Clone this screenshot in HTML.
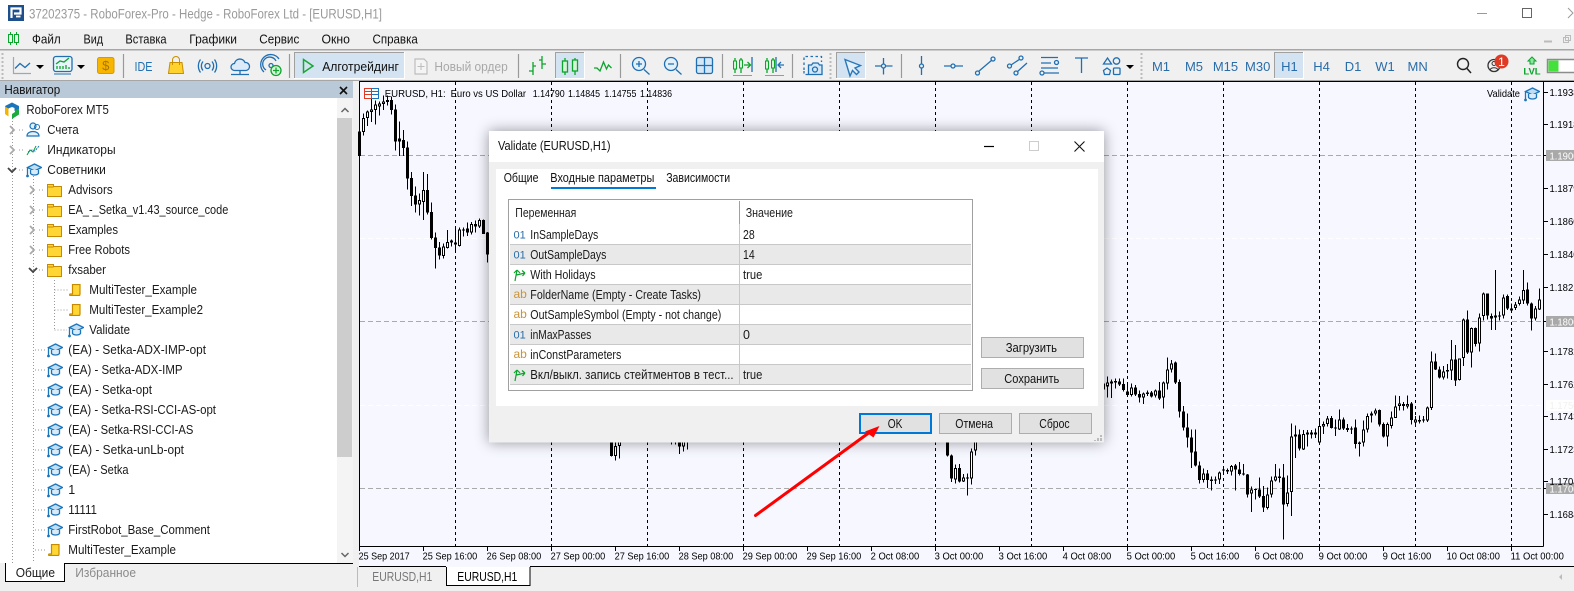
<!DOCTYPE html>
<html><head><meta charset="utf-8"><style>
html,body{margin:0;padding:0;background:#f0f0f0;width:1574px;height:591px;overflow:hidden}
svg{display:block;font-family:"Liberation Sans","Noto Sans CJK SC",sans-serif;font-size:12.5px;fill:#1a1a1a}
.m{font-size:12.5px;fill:#111}
.tf{font-size:13px;fill:#2a6ca8;text-anchor:middle}
.ic{fill:none;stroke:#1f6fb2;stroke-width:1.3}
.gr{fill:none;stroke:#0aa52a;stroke-width:1.3}
.sep{stroke:#999;stroke-width:1.2}
.tt{fill:none;stroke:#999;stroke-dasharray:1 2;stroke-width:1}
.v{fill:none;stroke:#aaa;stroke-width:1.8}
.o{fill:none;stroke:#444;stroke-width:1.8}
</style></head><body>
<svg width="1574" height="591" viewBox="0 0 1574 591" xmlns="http://www.w3.org/2000/svg">
<defs>
<symbol id="h" viewBox="0 0 16 15"><path d="M8.5 1 15.500 4.500 8.500 8 1.500 4.500Z" fill="#bfddf3" stroke="#1b75bb" stroke-width="1.300"/><path d="M4.500 7V10.500C6 12.500 11 12.500 12.500 10.500V7" fill="#d8ebf8" stroke="#1b75bb" stroke-width="1.300"/><path d="M1.500 5V12" fill="none" stroke="#1b75bb" stroke-width="1.300"/><circle cx="1.500" cy="13" r="1.400" fill="#1b75bb"/></symbol>
<symbol id="f" viewBox="0 0 15 13"><path d="M.5 .5h6v2h8v10H.5z" fill="#ffd633" stroke="#c68a00"/><path d="M.5 3h6" stroke="#c68a00"/></symbol>
<symbol id="s" viewBox="0 0 12 12"><path d="M3.500 .5h7.500v9.500c0 1-.5 1.500-1 1.500H1c-.5 0-.5-1.500 0-1.500h2.500z" fill="#ffd633" stroke="#c68a00" stroke-width="1.200"/></symbol>
<symbol id="b" viewBox="0 0 14 14"><path d="M2 13 4 2M4 2 1 5M4 2 7 5M3.500 7 12 5M12 5 9 2.500M12 5 9.500 8" fill="none" stroke="#0aa52a" stroke-width="1.200"/></symbol>
</defs>

<!-- title bar -->
<rect width="1574" height="29" fill="#fff"/>
<rect x="8" y="5" width="16" height="16" fill="#1d4f8c"/>
<path d="M11.500 18V8.500H20.500V13.500H14" fill="none" stroke="#fff" stroke-width="2.200"/><path d="M16 16.500h4.500" stroke="#fff" stroke-width="1.800"/>
<text x="29" y="18.500" font-size="13.500" style="fill:#9a9a9a" textLength="353" lengthAdjust="spacingAndGlyphs">37202375 - RoboForex-Pro - Hedge - RoboForex Ltd - [EURUSD,H1]</text>
<path d="M1477 13.500H1487" stroke="#999"/><rect x="1522.500" y="8.500" width="9" height="9" fill="none" stroke="#666"/><path d="M1568 8l5 5-5 5" fill="none" stroke="#999"/>

<!-- menu -->
<rect y="29" width="1574" height="20" fill="#f0f0f0"/>
<path d="M10.500 32V45M16.500 32V45" stroke="#0aa52a"/><rect x="8.500" y="34.500" width="4" height="8" fill="#e6f8e8" stroke="#0aa52a"/><rect x="14.500" y="34.500" width="4" height="8" fill="#e6f8e8" stroke="#0aa52a"/>
<text class="m" x="32" y="43.500" textLength="28.700" lengthAdjust="spacingAndGlyphs">Файл</text><text class="m" x="83.500" y="43.500" textLength="19.600" lengthAdjust="spacingAndGlyphs">Вид</text><text class="m" x="125.400" y="43.500" textLength="41.200" lengthAdjust="spacingAndGlyphs">Вставка</text><text class="m" x="189.300" y="43.500" textLength="47.700" lengthAdjust="spacingAndGlyphs">Графики</text><text class="m" x="259.300" y="43.500" textLength="40" lengthAdjust="spacingAndGlyphs">Сервис</text><text class="m" x="321.500" y="43.500" textLength="28.400" lengthAdjust="spacingAndGlyphs">Окно</text><text class="m" x="372.500" y="43.500" textLength="45.300" lengthAdjust="spacingAndGlyphs">Справка</text>
<path d="M1544 41.500h8" stroke="#bbb" stroke-width="2"/><rect x="1563.500" y="37.500" width="5" height="5" fill="none" stroke="#bbb"/><rect x="1565.500" y="35.500" width="5" height="5" fill="none" stroke="#bbb"/>
<rect y="49" width="1574" height="1.500" fill="#a6a6a6"/>

<!-- toolbar -->
<rect y="50.500" width="1574" height="30" fill="#f0f0f0"/>
<rect y="80" width="1574" height="1" fill="#a6a6a6"/>
<path d="M2.500 53V79M830.500 53V79M1141.500 53V79" stroke="#bbb" stroke-width="2" stroke-dasharray="2 2"/>
<path d="M13.500 57V73.500H31" fill="none" stroke="#a0a8ae" stroke-width="1.200"/><path d="M15 68.500l5-5 5 4 5-4.500" class="ic"/>
<path d="M36 65h8l-4 4z" fill="#000"/>
<rect x="53.500" y="56.500" width="18.500" height="15" rx="2.500" fill="#e9f4fc" stroke="#1f6fb2" stroke-width="1.300"/><path d="M56 64l4-3 4 1 5-4" class="gr"/><path d="M57 69v-3M60 69v-3M63 69v-3M66 69v-4M69 69v-2" class="gr"/><path d="M54 74h17" stroke="#1f6fb2"/>
<path d="M77 65h8l-4 4z" fill="#000"/>
<rect x="97.500" y="57.500" width="16.500" height="16" rx="2" fill="#f7b500" stroke="#d99a00"/><text x="105.800" y="70" font-size="13" style="fill:#a87500" text-anchor="middle">$</text>
<path class="sep" d="M123.500 54V78M289.500 54V78M518.500 54V78M620.500 54V78M722.500 54V78M792.500 54V78M901.500 54V78"/>
<text x="134.500" y="71" font-size="13" style="fill:#1f6fb2" textLength="18" lengthAdjust="spacingAndGlyphs">IDE</text>
<path d="M168.500 73.500l1.500-11h12l1.500 11z" fill="#ffd22e" stroke="#c88f00"/><path d="M172.500 65v-5a3.500 3.500 0 0 1 7 0v5" fill="none" stroke="#c88f00"/>
<circle cx="207.500" cy="66" r="2.500" class="ic"/><path d="M203 61.500a7 7 0 0 0 0 9M212 61.500a7 7 0 0 1 0 9M200.500 59.500a11 11 0 0 0 0 13M214.500 59.500a11 11 0 0 1 0 13" class="ic"/>
<path d="M234.500 70.500a3.500 3.500 0 0 1 0-7 5.500 5.500 0 0 1 10.500-1 4 4 0 0 1 1 8z" fill="#dcebf7" stroke="#1f6fb2" stroke-width="1.300"/><path d="M231 74.500h18M240 71V75" class="ic"/>
<circle cx="271" cy="65.500" r="2" class="ic"/><path d="M266 70a7 7 0 1 1 10-9M264 72a10 10 0 1 1 15-13" class="ic"/><circle cx="276" cy="70.500" r="5" fill="#d8f5dc" stroke="#0aa52a" stroke-width="1.300"/><path d="M273 70.500h6M276 67.500v6" class="gr"/>
<rect x="294" y="52" width="110" height="26" fill="#d3e3f2"/><path d="M294.500 78V52.500H404" fill="none" stroke="#a0a0a0"/><path d="M404.500 52V78.500H294" fill="none" stroke="#fff"/>
<path d="M303.500 59.500 313 66 303.500 72.500Z" fill="none" stroke="#16a832" stroke-width="1.500"/>
<text x="322.200" y="71" font-size="13" style="fill:#111" textLength="76.700" lengthAdjust="spacingAndGlyphs">Алготрейдинг</text>
<path d="M415 59h9l3 3v12h-12z" fill="#f4f4f4" stroke="#bdbdbd" stroke-width="1.200"/><path d="M421 63v7M417.500 66.500h7" stroke="#bdbdbd"/>
<text x="434.400" y="71" font-size="13" style="fill:#a8a8a8" textLength="73.400" lengthAdjust="spacingAndGlyphs">Новый ордер</text>
<path d="M529 71h4M533 62V75M533 66h3M539 60h3M542 56V69M542 64h4" class="gr"/>
<rect x="555" y="52" width="29" height="26" fill="#d3e3f2"/><path d="M555.500 78V52.500H584" fill="none" stroke="#a0a0a0"/><path d="M584.500 52V78.500H555" fill="none" stroke="#fff"/>
<path d="M565 58V75M575 58V75" class="gr"/><rect x="562.500" y="61" width="5" height="11" fill="#d6f3da" stroke="#0aa52a" stroke-width="1.300"/><rect x="572.500" y="60" width="5" height="11" fill="#d6f3da" stroke="#0aa52a" stroke-width="1.300"/>
<path d="M594 68h3l3 3 3.500-9 3 7 2-4 3 3" class="gr"/>
<circle cx="639" cy="64" r="6.500" fill="#e3f0fa" stroke="#1f6fb2" stroke-width="1.300"/><path d="M636 64h6M639 61v6M644 69.500l5.500 5" class="ic"/>
<circle cx="671" cy="64" r="6.500" fill="#e3f0fa" stroke="#1f6fb2" stroke-width="1.300"/><path d="M668 64h6M676 69.500l5.500 5" class="ic"/>
<rect x="696.500" y="57.500" width="16" height="16" rx="2" fill="#d4e7f6" stroke="#1f6fb2" stroke-width="1.300"/><path d="M704.500 58v15M697 65.500h15" class="ic"/>
<path d="M735 58V73M741 58V73" class="gr"/><rect x="733.500" y="61" width="3" height="8" fill="#d6f3da" stroke="#0aa52a"/><rect x="739.500" y="60" width="3" height="8" fill="#d6f3da" stroke="#0aa52a"/><path d="M744 65h6M747.500 62l3 3-3 3" class="gr"/><path d="M752 57V72" class="ic"/><path d="M733 75.500h19" stroke="#999"/>
<path d="M767 58V73M773 58V73" class="gr"/><rect x="765.500" y="61" width="3" height="8" fill="#d6f3da" stroke="#0aa52a"/><rect x="771.500" y="60" width="3" height="8" fill="#d6f3da" stroke="#0aa52a"/><path d="M776 57V72" class="ic"/><path d="M778 65h6M781 62l-3 3 3 3" class="ic"/><path d="M765 75.500h19" stroke="#999"/>
<path d="M804 70V56.500H821.500V62M808 74.500H804V70" fill="none" stroke="#1f6fb2" stroke-width="1.300" stroke-dasharray="2.500 2.500"/><path d="M808.500 74.500V65h3l1.500-2h5l1.500 2h2.500v9.500z" fill="#d4e7f6" stroke="#1f6fb2" stroke-width="1.300"/><circle cx="815" cy="69.500" r="2.500" class="ic"/>
<rect x="836" y="52" width="29" height="26" fill="#d3e3f2"/><path d="M836.500 78V52.500H865" fill="none" stroke="#a0a0a0"/><path d="M865.500 52V78.500H836" fill="none" stroke="#fff"/>
<path d="M845 59.500l15.500 6-5.500 2.500 4 4-2.500 2.500-4-4-2.500 5.500z" fill="#e3f0fa" stroke="#2a78b8" stroke-width="1.400"/>
<path d="M875 66h6.500M885.500 66h7M883.500 58V64M883.500 68V74.500" class="ic"/><circle cx="883.500" cy="66" r="2" class="ic"/>
<path d="M921.500 56V64M921.500 68V75" class="ic"/><circle cx="921.500" cy="66" r="2" class="ic"/>
<path d="M944 66h7M955 66h8" class="ic"/><circle cx="953" cy="66" r="2" class="ic"/>
<path d="M978.500 71.500 992 60" class="ic"/><circle cx="977.500" cy="73" r="2" class="ic"/><circle cx="993" cy="59" r="2" class="ic"/>
<path d="M1011 65 1020 59M1017 72 1027 63" class="ic"/><circle cx="1009.500" cy="66" r="2" class="ic"/><circle cx="1021" cy="58" r="2" class="ic"/><circle cx="1016" cy="73" r="2" class="ic"/>
<path d="M1041 57.500h17M1041 63h10M1041 68h17M1044 73h15" class="ic"/><circle cx="1056.500" cy="62.500" r="2" class="ic"/><circle cx="1042" cy="73" r="2" class="ic"/>
<path d="M1075 58h13M1081.500 58V73" class="ic"/>
<path d="M1107.500 58 1111.500 64H1103.500Z M1103.500 70.500l3.500-2.500 3.500 2.500-1 4h-5z" class="ic"/><circle cx="1116.500" cy="61" r="3.200" class="ic"/><rect x="1113.500" y="68" width="6.500" height="6.500" rx="1" class="ic"/>
<path d="M1126 65h8l-4 4z" fill="#000"/>
<rect x="1274" y="52" width="29" height="26" fill="#d3e3f2"/><path d="M1274.500 78V52.500H1303" fill="none" stroke="#a0a0a0"/><path d="M1303.500 52V78.500H1274" fill="none" stroke="#fff"/>
<text class="tf" x="1161" y="71">M1</text><text class="tf" x="1194" y="71">M5</text><text class="tf" x="1225.500" y="71">M15</text><text class="tf" x="1257.700" y="71">M30</text><text class="tf" x="1289.400" y="71">H1</text><text class="tf" x="1321.500" y="71">H4</text><text class="tf" x="1353" y="71">D1</text><text class="tf" x="1385" y="71">W1</text><text class="tf" x="1417.600" y="71">MN</text>
<circle cx="1463" cy="64" r="5.500" fill="none" stroke="#222" stroke-width="1.400"/><path d="M1467 68.500l4 4.500" stroke="#222" stroke-width="1.500"/>
<circle cx="1494" cy="65.500" r="6" fill="none" stroke="#333" stroke-width="1.300"/><circle cx="1494" cy="63.500" r="2" fill="none" stroke="#333"/><path d="M1490 70c1-3 7-3 8 0" fill="none" stroke="#333"/>
<circle cx="1501.500" cy="61.500" r="7" fill="#e03a25"/><text x="1501.500" y="66" font-size="12" text-anchor="middle" style="fill:#fff">1</text>
<path d="M1532 57l4 4h-2v3h-4v-3h-2z" fill="#8fe6a0" stroke="#0aa52a"/><text x="1532" y="74.500" font-size="9.500" font-weight="bold" text-anchor="middle" style="fill:#0aa52a">LVL</text>
<rect x="1547.500" y="59.500" width="30" height="13" fill="#fff" stroke="#8c8c8c" stroke-width="1.500"/><rect x="1548.500" y="60.500" width="10" height="11" fill="#44e03c"/>

<!-- navigator -->
<rect y="81" width="353" height="17" fill="#b9c9d8"/>
<text x="4.400" y="94" style="fill:#111" textLength="55.800" lengthAdjust="spacingAndGlyphs">Навигатор</text>
<path d="M340 87l7 7M347 87l-7 7" stroke="#111" stroke-width="1.600"/>
<rect y="98" width="337" height="465" fill="#fff"/>
<rect x="337" y="98" width="16" height="465" fill="#f4f4f4"/>
<rect x="337" y="118" width="15" height="339" fill="#cdcdcd"/>
<path d="M341.500 112l3.500-3.500 3.500 3.500" fill="none" stroke="#666" stroke-width="1.500"/><path d="M341.500 553l3.500 3.500 3.500-3.500" fill="none" stroke="#666" stroke-width="1.500"/>
<path class="tt" d="M12.500 118V563M33.500 176V563M54.500 280V330M54.500 290H68M54.500 310H68M54.500 330H67M35 350H46M35 370H46M35 390H46M35 410H46M35 430H46M35 450H46M35 470H46M35 490H46M35 510H46M35 530H46M35 550H47M19 130H25M19 150H25M19 170H25M39 190H45M39 210H45M39 230H45M39 250H45M39 270H45"/>
<!-- RoboForex logo -->
<path d="M5 106l7-3.500 7 3.500v3l-4.500 2v-3l-2.500-1-3.500 1.500v4z" fill="#1b75bb"/><path d="M5 106.500v7.500l3.500 2.500v-8z" fill="#f2b400"/><path d="M19 109v5.500l-7 4.500v-5l3-2v-2z" fill="#1bab3c"/>
<text x="26.400" y="114" textLength="82.500" lengthAdjust="spacingAndGlyphs">RoboForex MT5</text>
<path class="v" d="M10 126l4 4-4 4M10 146l4 4-4 4M30 186l4 4-4 4M30 206l4 4-4 4M30 226l4 4-4 4M30 246l4 4-4 4"/>
<path class="o" d="M8 168l4 4 4-4M29 268l4 4 4-4"/>
<circle cx="33" cy="126" r="3" fill="#e3f0fa" stroke="#1b75bb" stroke-width="1.200"/><path d="M27 136c0-6 12-6 12 0z" fill="#e3f0fa" stroke="#1b75bb" stroke-width="1.200"/><circle cx="37" cy="127" r="2.500" fill="none" stroke="#1b75bb"/>
<text x="47.300" y="134" textLength="31.400" lengthAdjust="spacingAndGlyphs">Счета</text>
<path d="M27 155l3-5 3 2 3-6" fill="none" stroke="#0aa52a"/><path d="M28 152l4-2 3 1 4-5" fill="none" stroke="#1b75bb" stroke-dasharray="2 1"/>
<text x="47.300" y="154" textLength="68.300" lengthAdjust="spacingAndGlyphs">Индикаторы</text>
<use href="#h" x="26" y="163" width="16" height="15"/><text x="47.300" y="174" textLength="58.500" lengthAdjust="spacingAndGlyphs">Советники</text>
<use href="#f" x="47" y="184" width="15" height="13"/><text x="68.300" y="194" textLength="44.300" lengthAdjust="spacingAndGlyphs">Advisors</text>
<use href="#f" x="47" y="204" width="15" height="13"/><text x="68.300" y="214" textLength="160" lengthAdjust="spacingAndGlyphs">EA_-_Setka_v1.43_source_code</text>
<use href="#f" x="47" y="224" width="15" height="13"/><text x="68.300" y="234" textLength="49.700" lengthAdjust="spacingAndGlyphs">Examples</text>
<use href="#f" x="47" y="244" width="15" height="13"/><text x="68.300" y="254" textLength="61.700" lengthAdjust="spacingAndGlyphs">Free Robots</text>
<use href="#f" x="47" y="264" width="15" height="13"/><text x="68.300" y="274" textLength="37.700" lengthAdjust="spacingAndGlyphs">fxsaber</text>
<use href="#s" x="69" y="284" width="12" height="12"/><text x="89.300" y="294" textLength="107.700" lengthAdjust="spacingAndGlyphs">MultiTester_Example</text>
<use href="#s" x="69" y="304" width="12" height="12"/><text x="89.300" y="314" textLength="113.700" lengthAdjust="spacingAndGlyphs">MultiTester_Example2</text>
<use href="#h" x="68" y="323" width="16" height="15"/><text x="89.300" y="334" textLength="40.700" lengthAdjust="spacingAndGlyphs">Validate</text>
<use href="#h" x="47" y="343" width="16" height="15"/><text x="68.300" y="354" textLength="137.700" lengthAdjust="spacingAndGlyphs">(EA) - Setka-ADX-IMP-opt</text>
<use href="#h" x="47" y="363" width="16" height="15"/><text x="68.300" y="374" textLength="114.300" lengthAdjust="spacingAndGlyphs">(EA) - Setka-ADX-IMP</text>
<use href="#h" x="47" y="383" width="16" height="15"/><text x="68.300" y="394" textLength="83.700" lengthAdjust="spacingAndGlyphs">(EA) - Setka-opt</text>
<use href="#h" x="47" y="403" width="16" height="15"/><text x="68.300" y="414" textLength="147.700" lengthAdjust="spacingAndGlyphs">(EA) - Setka-RSI-CCI-AS-opt</text>
<use href="#h" x="47" y="423" width="16" height="15"/><text x="68.300" y="434" textLength="125" lengthAdjust="spacingAndGlyphs">(EA) - Setka-RSI-CCI-AS</text>
<use href="#h" x="47" y="443" width="16" height="15"/><text x="68.300" y="454" textLength="115.700" lengthAdjust="spacingAndGlyphs">(EA) - Setka-unLb-opt</text>
<use href="#h" x="47" y="463" width="16" height="15"/><text x="68.300" y="474" textLength="60.300" lengthAdjust="spacingAndGlyphs">(EA) - Setka</text>
<use href="#h" x="47" y="483" width="16" height="15"/><text x="68.300" y="494">1</text>
<use href="#h" x="47" y="503" width="16" height="15"/><text x="68.300" y="514" textLength="28.700" lengthAdjust="spacingAndGlyphs">11111</text>
<use href="#h" x="47" y="523" width="16" height="15"/><text x="68.300" y="534" textLength="141.700" lengthAdjust="spacingAndGlyphs">FirstRobot_Base_Comment</text>
<use href="#s" x="48" y="544" width="12" height="12"/><text x="68.300" y="554" textLength="107.700" lengthAdjust="spacingAndGlyphs">MultiTester_Example</text>
<rect x="0" y="563" width="353" height="28" fill="#f0f0f0"/>
<path d="M65 563.500H353" stroke="#000"/>
<path d="M5.500 563V581.500H64.500V563" fill="#fff" stroke="#000"/>
<text x="15.700" y="577" textLength="39.300" lengthAdjust="spacingAndGlyphs">Общие</text><text x="75.300" y="577" style="fill:#8a8a8a" textLength="60.700" lengthAdjust="spacingAndGlyphs">Избранное</text>

<!-- chart -->
<rect x="359" y="82" width="1215" height="485" fill="#f6f7ff"/>
<path d="M359 81.500H1574M359.500 81V546M359 546.500H1543.500M1543.500 81V546.500" stroke="#000" fill="none"/>
<path d="M359 566.500H446M530 566.500H1574" stroke="#000"/>
<!-- grid -->
<path d="M360 155.500H1543M360 321.500H1543M360 488.500H1543" stroke="#aaa" stroke-dasharray="5 3"/>
<path d="M360 238.500H1543M360 405.500H1543" stroke="#fff" stroke-dasharray="5 3"/>
<path d="M455.500 82V546M551.500 82V546M647.500 82V546M743.500 82V546M839.500 82V546M935.500 82V546M1031.500 82V546M1127.500 82V546M1223.500 82V546M1319.500 82V546M1415.500 82V546M1511.500 82V546" stroke="#000" stroke-dasharray="3 3"/>
<!-- candles right -->
<g transform="translate(1100.170,280) scale(.33333)" shape-rendering="crispEdges" fill="none">
<path stroke="#000" stroke-width="3" d="M10 305V358M22 292V352M34 298V354M46 296V325M58 295V318M70 296V335M82 308V350M94 310V350M106 315V348M118 332V368M130 338V372M142 332V348M154 333V352M166 328V352M178 306V360M190 304V386M202 232V328M214 240V278M226 245V312M238 298V412M250 378V452M262 400V502M274 448V564M286 448V560M298 545V610M310 565V608M322 570V624M334 590V632M346 590V612M358 575V612M370 560V582M382 566V582M394 555V586M406 552V632M418 546V586M430 552V586M442 582V652M454 620V696M466 626V658M478 592V654M490 618V696M502 622V688M514 590V652M526 552V604M538 565V607M550 552V778M562 586V680M574 430V708M586 436V534M598 448V512M610 450V510M622 450V500M634 450V475M646 446V474M658 418V490M670 424V462M682 408V440M694 408V446M706 418V468M718 388V450M730 412V450M742 432V456M754 440V462M766 418V506M778 484V530M790 422V500M802 400V458M814 394V428M826 385V406M838 388V440M850 428V472M862 428V500M874 394V446M886 346V414M898 348V392M910 366V392M922 346V386M934 366V434M946 408V436M958 406V430M970 408V428M982 380V426M994 214V390M1006 220V270M1018 260V296M1030 258V298M1042 252V296M1054 180V300M1066 195V318M1078 235V302M1090 115V258M1102 92V222M1114 142V262M1126 142V200M1138 100V214M1150 38V122M1162 40V118M1174 100V150M1186 -30V150M1198 95V122M1210 44V116M1222 44V90M1234 70V96M1246 66V90M1258 50V76M1270 -30V72M1282 8V76M1294 68V152M1306 78V122M1318 26V90"/>
<path stroke="#000" stroke-width="9" d="M10 310V325M22 310V320M34 305V311M46 303V308M58 304V314M70 312V330M82 334V345M94 322V345M106 322V344M118 342V353M130 341V352M142 338V342M154 338V350M166 331V347M178 331V356M190 307V352M202 268V311M214 250V268M226 247V308M238 306V395M250 394V443M262 442V472M274 472V518M286 514V556M298 557V600M310 580V600M322 580V600M334 599V603M346 598V602M358 577V598M370 568V572M382 570V574M394 558V574M406 556V568M418 568V582M430 580V584M442 583V644M454 628V640M466 627V630M478 628V650M490 648V682M502 644V684M514 602V644M526 590V602M538 590V594M550 592V674M562 638V672M574 470V636M586 464V470M598 464V506M610 462V508M622 458V464M634 458V463M646 458V464M658 438V488M670 432V440M682 416V432M694 414V444M706 442V446M718 418V448M730 418V446M742 444V450M754 445V448M766 442V492M778 488V492M790 448V488M802 408V448M814 400V406M826 392V400M838 390V434M850 432V470M862 432V470M874 412V438M886 380V414M898 370V378M910 372V378M922 372V380M934 370V420M946 418V428M958 420V424M970 419V422M982 382V422M994 244V384M1006 244V268M1018 268V292M1030 274V292M1042 270V274M1054 238V272M1066 238V302M1078 236V300M1090 118V234M1102 118V218M1114 144V218M1126 144V192M1138 112V190M1150 40V108M1162 40V106M1174 108V115M1186 107V112M1198 106V110M1210 52V106M1222 48V86M1234 86V92M1246 74V84M1258 58V72M1270 30V62M1282 28V70M1294 70V116M1306 86V116M1318 58V88"/>
<path stroke="#fff" stroke-width="3" d="M10 313V322M22 313V317M94 325V342M130 344V349M166 334V344M190 310V349M202 271V308M214 253V265M310 583V597M358 580V595M394 561V571M454 631V637M502 647V681M514 605V641M526 593V599M562 641V669M574 473V633M586 467V467M610 465V505M622 461V461M646 461V461M658 441V485M670 435V437M682 419V429M718 421V445M790 451V485M802 411V445M814 403V403M826 395V397M862 435V467M874 415V435M886 383V411M898 373V375M910 375V375M922 375V377M946 421V425M982 385V419M994 247V381M1030 277V289M1054 241V269M1078 239V297M1090 121V231M1114 147V215M1138 115V187M1150 43V105M1186 109V110M1210 55V103M1234 89V89M1246 77V81M1258 61V69M1270 33V59M1306 89V113M1318 61V85"/>
</g>
<!-- candles left -->
<g transform="translate(356.170,82) scale(.33333)" shape-rendering="crispEdges" fill="none">
<path stroke="#000" stroke-width="3" d="M10 100V228M22 95V160M34 86V132M46 50V120M58 56V128M70 58V100M82 40V84M94 40V70M106 44V98M118 68V205M130 118V222M142 144V222M154 178V322M166 270V372M178 314V392M190 334V400M202 270V414M214 276V398M226 362V472M238 452V560M250 480V532M262 484V530M274 444V500M286 472V494M298 432V512M310 436V494M322 436V464M334 422V462M346 420V458M358 416V452M370 410V438M382 412V456M394 450V542"/>
<path stroke="#000" stroke-width="9" d="M10 148V222M22 108V150M34 88V108M46 82V90M58 68V84M70 64V74M82 58V66M94 54V60M106 54V84M118 82V178M130 170V178M142 174V198M154 196V290M166 288V342M178 340V368M190 354V368M202 324V360M214 324V392M226 390V468M238 466V498M250 496V520M262 494V522M274 480V498M286 476V482M298 482V488M310 442V492M322 442V446M334 440V452M346 426V452M358 426V434M370 414V434M382 414V456M394 452V518"/>
<path stroke="#fff" stroke-width="3" d="M22 111V147M34 91V105M46 85V87M58 71V81M70 67V71M82 61V63M190 357V365M202 327V357M262 497V519M274 483V495M286 479V479M310 445V489M346 429V449M370 417V431"/>
</g>
<!-- candles below dialog -->
<g transform="translate(750.170,320) scale(.33333)" shape-rendering="crispEdges" fill="none">
<path stroke="#000" stroke-width="3" d="M592 366V410M604 404V486M616 434V490M628 432V488M640 462V486M652 460V526M664 386V494M676 366V406M1060 180V240M1072 170V226"/>
<path stroke="#000" stroke-width="9" d="M592 366V406M604 406V476M616 444V478M628 444V484M640 472V484M652 472V476M664 394V476M676 366V392M1060 192V208M1072 188V198"/>
<path stroke="#fff" stroke-width="3" d="M616 447V475M640 475V481M664 397V473M676 366V389M1072 191V195"/>
</g>
<g transform="translate(356.170,440) scale(.33333)" shape-rendering="crispEdges" fill="none">
<path stroke="#000" stroke-width="3" d="M766 6V50M778 6V62M790 6V56M946 6V14M958 6V14M970 6V42M982 6V34M994 6V28"/>
<path stroke="#000" stroke-width="9" d="M766 6V48M778 18V48M790 6V18M970 6V20M982 6V20"/>
<path stroke="#fff" stroke-width="3" d="M778 21V45M790 6V15M982 6V17"/>
</g>
<!-- chart header -->
<rect x="364.500" y="88.500" width="7" height="10" fill="#fff" stroke="#e03a25"/><path d="M365 91.500h6M365 94.500h6" stroke="#e03a25"/>
<rect x="371.500" y="88.500" width="7" height="10" fill="#fff" stroke="#1b75bb"/><path d="M372 91.500h6M372 94.500h6" stroke="#1b75bb"/>
<g style="font-size:10.500px;fill:#000">
<text x="384.700" y="97" textLength="61" lengthAdjust="spacingAndGlyphs">EURUSD, H1:</text><text x="450.600" y="97" textLength="75.500" lengthAdjust="spacingAndGlyphs">Euro vs US Dollar</text><text x="532.700" y="97" textLength="32" lengthAdjust="spacingAndGlyphs">1.14790</text><text x="568" y="97" textLength="32" lengthAdjust="spacingAndGlyphs">1.14845</text><text x="604.400" y="97" textLength="32" lengthAdjust="spacingAndGlyphs">1.14755</text><text x="640" y="97" textLength="32" lengthAdjust="spacingAndGlyphs">1.14836</text><text x="1487" y="97" textLength="33" lengthAdjust="spacingAndGlyphs">Validate</text></g>
<use href="#h" x="1524" y="87" width="16" height="15"/>
<!-- price axis -->
<path stroke="#000" d="M1543 92.500h5M1543 124.500h5M1543 155.500h5M1543 188.500h5M1543 221.500h5M1543 254.500h5M1543 287.500h5M1543 321.500h5M1543 351.500h5M1543 384.500h5M1543 416.500h5M1543 449.500h5M1543 481.500h5M1543 488.500h5M1543 514.500h5"/>
<rect x="1546" y="150" width="28" height="11" fill="#a9a9a9"/><rect x="1546" y="316" width="28" height="11" fill="#a9a9a9"/><rect x="1546" y="483" width="28" height="11" fill="#a9a9a9"/><rect x="1546" y="400" width="28" height="11" fill="#fff"/>
<g style="font-size:10.500px;fill:#000">
<text x="1549.500" y="96" textLength="29" lengthAdjust="spacingAndGlyphs">1.1938</text><text x="1549.500" y="128" textLength="29" lengthAdjust="spacingAndGlyphs">1.1918</text><text x="1549.500" y="192" textLength="29" lengthAdjust="spacingAndGlyphs">1.1879</text><text x="1549.500" y="225" textLength="29" lengthAdjust="spacingAndGlyphs">1.1860</text><text x="1549.500" y="258" textLength="29" lengthAdjust="spacingAndGlyphs">1.1840</text><text x="1549.500" y="291" textLength="29" lengthAdjust="spacingAndGlyphs">1.1821</text><text x="1549.500" y="355" textLength="29" lengthAdjust="spacingAndGlyphs">1.1782</text><text x="1549.500" y="388" textLength="29" lengthAdjust="spacingAndGlyphs">1.1762</text><text x="1549.500" y="420" textLength="29" lengthAdjust="spacingAndGlyphs">1.1743</text><text x="1549.500" y="453" textLength="29" lengthAdjust="spacingAndGlyphs">1.1723</text><text x="1549.500" y="485" textLength="29" lengthAdjust="spacingAndGlyphs">1.1704</text><text x="1549.500" y="518" textLength="29" lengthAdjust="spacingAndGlyphs">1.1684</text></g>
<g style="font-size:10.500px;fill:#fff"><text x="1549.500" y="159.500" textLength="29" lengthAdjust="spacingAndGlyphs">1.1900</text><text x="1549.500" y="325.500" textLength="29" lengthAdjust="spacingAndGlyphs">1.1800</text><text x="1549.500" y="492.500" textLength="29" lengthAdjust="spacingAndGlyphs">1.1700</text><text x="1549.500" y="409" style="fill:#f0f0f0" textLength="29" lengthAdjust="spacingAndGlyphs">1.1750</text></g>
<!-- date axis -->
<path stroke="#000" d="M359.500 547v4M423.500 547v4M487.500 547v4M551.500 547v4M615.500 547v4M679.500 547v4M743.500 547v4M807.500 547v4M871.500 547v4M935.500 547v4M999.500 547v4M1063.500 547v4M1127.500 547v4M1191.500 547v4M1255.500 547v4M1319.500 547v4M1383.500 547v4M1447.500 547v4M1511.500 547v4"/>
<g style="font-size:10.500px;fill:#000">
<text x="358.600" y="559.500" textLength="51" lengthAdjust="spacingAndGlyphs">25 Sep 2017</text><text x="422.600" y="559.500" textLength="54.700" lengthAdjust="spacingAndGlyphs">25 Sep 16:00</text><text x="486.600" y="559.500" textLength="54.700" lengthAdjust="spacingAndGlyphs">26 Sep 08:00</text><text x="550.600" y="559.500" textLength="54.700" lengthAdjust="spacingAndGlyphs">27 Sep 00:00</text><text x="614.600" y="559.500" textLength="54.700" lengthAdjust="spacingAndGlyphs">27 Sep 16:00</text><text x="678.600" y="559.500" textLength="54.700" lengthAdjust="spacingAndGlyphs">28 Sep 08:00</text><text x="742.600" y="559.500" textLength="54.700" lengthAdjust="spacingAndGlyphs">29 Sep 00:00</text><text x="806.600" y="559.500" textLength="54.700" lengthAdjust="spacingAndGlyphs">29 Sep 16:00</text><text x="870.600" y="559.500" textLength="48.700" lengthAdjust="spacingAndGlyphs">2 Oct 08:00</text><text x="934.600" y="559.500" textLength="48.700" lengthAdjust="spacingAndGlyphs">3 Oct 00:00</text><text x="998.600" y="559.500" textLength="48.700" lengthAdjust="spacingAndGlyphs">3 Oct 16:00</text><text x="1062.600" y="559.500" textLength="48.700" lengthAdjust="spacingAndGlyphs">4 Oct 08:00</text><text x="1126.600" y="559.500" textLength="48.700" lengthAdjust="spacingAndGlyphs">5 Oct 00:00</text><text x="1190.600" y="559.500" textLength="48.700" lengthAdjust="spacingAndGlyphs">5 Oct 16:00</text><text x="1254.600" y="559.500" textLength="48.700" lengthAdjust="spacingAndGlyphs">6 Oct 08:00</text><text x="1318.600" y="559.500" textLength="48.700" lengthAdjust="spacingAndGlyphs">9 Oct 00:00</text><text x="1382.600" y="559.500" textLength="48.700" lengthAdjust="spacingAndGlyphs">9 Oct 16:00</text><text x="1446.600" y="559.500" textLength="53.300" lengthAdjust="spacingAndGlyphs">10 Oct 08:00</text><text x="1510.600" y="559.500" textLength="53.300" lengthAdjust="spacingAndGlyphs">11 Oct 00:00</text></g>
<!-- bottom tabs -->
<path d="M357.500 567V587" stroke="#bbb"/>
<path d="M446.500 567V585.500H530V567" fill="#fff" stroke="#000"/>
<text x="372.300" y="581" style="fill:#777" textLength="60" lengthAdjust="spacingAndGlyphs">EURUSD,H1</text><text x="457.300" y="581" style="fill:#000" textLength="60" lengthAdjust="spacingAndGlyphs">EURUSD,H1</text>
<path d="M1562 574v6l-3-3z" fill="#bbb"/>

<!-- dialog -->
<rect x="489" y="131" width="615" height="311.500" fill="#f0f0f0" style="filter:drop-shadow(0 0 7px rgba(0,0,0,.4))"/>
<rect x="489" y="131" width="615" height="31" fill="#fff"/>
<text x="498" y="150" style="fill:#111" textLength="112.500" lengthAdjust="spacingAndGlyphs">Validate (EURUSD,H1)</text>
<path d="M984 146.500H994" stroke="#000" stroke-width="1.200"/><rect x="1029.500" y="141.500" width="9" height="9" fill="none" stroke="#ccc"/><path d="M1074.500 141.500l10 10M1084.500 141.500l-10 10" stroke="#111" stroke-width="1.100"/>
<rect x="496" y="169" width="602" height="237" fill="#fff"/>
<text x="503.700" y="182" style="fill:#111" textLength="34.800" lengthAdjust="spacingAndGlyphs">Общие</text><text x="550.300" y="182" style="fill:#111" textLength="104" lengthAdjust="spacingAndGlyphs">Входные параметры</text><text x="666.200" y="182" style="fill:#111" textLength="63.900" lengthAdjust="spacingAndGlyphs">Зависимости</text>
<rect x="551" y="187" width="105" height="2" fill="#0078d7"/>
<!-- table -->
<rect x="508.500" y="199.500" width="464" height="191" fill="#fff" stroke="#a0a0a0"/>
<rect x="510" y="245" width="461" height="19" fill="#e9e9e9"/><rect x="510" y="285" width="461" height="19" fill="#e9e9e9"/><rect x="510" y="325" width="461" height="19" fill="#e9e9e9"/><rect x="510" y="365" width="461" height="19" fill="#e9e9e9"/>
<path d="M510 244.500H971M510 264.500H971M510 284.500H971M510 304.500H971M510 324.500H971M510 344.500H971M510 364.500H971M510 384.500H971" stroke="#c8c8c8"/>
<path d="M739.500 201V224" stroke="#a0a0a0"/><path d="M739.500 224V384" stroke="#c8c8c8"/>
<text x="515.300" y="217" style="fill:#222" textLength="61" lengthAdjust="spacingAndGlyphs">Переменная</text><text x="745.700" y="217" style="fill:#222" textLength="47.300" lengthAdjust="spacingAndGlyphs">Значение</text>
<g style="font-size:11px;fill:#2a6ca8"><text x="513.500" y="238.500">01</text><text x="513.500" y="258.500">01</text><text x="513.500" y="338.500">01</text></g>
<g style="font-size:12px;fill:#c9943c"><text x="513.500" y="298">ab</text><text x="513.500" y="318">ab</text><text x="513.500" y="358">ab</text></g>
<use href="#b" x="513" y="268" width="14" height="14"/><use href="#b" x="513" y="368" width="14" height="14"/>
<text x="530.300" y="239" textLength="68" lengthAdjust="spacingAndGlyphs">InSampleDays</text><text x="743" y="239" textLength="11.700" lengthAdjust="spacingAndGlyphs">28</text>
<text x="530.300" y="259" textLength="76" lengthAdjust="spacingAndGlyphs">OutSampleDays</text><text x="743" y="259" textLength="11.700" lengthAdjust="spacingAndGlyphs">14</text>
<text x="530.300" y="279" textLength="65.300" lengthAdjust="spacingAndGlyphs">With Holidays</text><text x="743" y="279" textLength="19.300" lengthAdjust="spacingAndGlyphs">true</text>
<text x="530.300" y="299" textLength="170.700" lengthAdjust="spacingAndGlyphs">FolderName (Empty - Create Tasks)</text>
<text x="530.300" y="319" textLength="191" lengthAdjust="spacingAndGlyphs">OutSampleSymbol (Empty - not change)</text>
<text x="530.300" y="339" textLength="61" lengthAdjust="spacingAndGlyphs">inMaxPasses</text><text x="743" y="339">0</text>
<text x="530.300" y="359" textLength="91" lengthAdjust="spacingAndGlyphs">inConstParameters</text>
<text x="530.300" y="379" textLength="203.300" lengthAdjust="spacingAndGlyphs">Вкл/выкл. запись стейтментов в тест...</text><text x="743" y="379" textLength="19.300" lengthAdjust="spacingAndGlyphs">true</text>
<!-- buttons -->
<rect x="981.500" y="337.500" width="102" height="20" fill="#e1e1e1" stroke="#adadad"/><text x="1005.700" y="352" style="fill:#111" textLength="51.300" lengthAdjust="spacingAndGlyphs">Загрузить</text>
<rect x="981.500" y="368.500" width="102" height="20" fill="#e1e1e1" stroke="#adadad"/><text x="1004.300" y="383" style="fill:#111" textLength="55" lengthAdjust="spacingAndGlyphs">Сохранить</text>
<rect x="860" y="414" width="71" height="19" fill="#e1e1e1" stroke="#0078d7" stroke-width="2"/><text x="887.700" y="428" style="fill:#111" textLength="14.700" lengthAdjust="spacingAndGlyphs">OK</text>
<rect x="939.500" y="413.500" width="72" height="20" fill="#e1e1e1" stroke="#adadad"/><text x="955.300" y="428" style="fill:#111" textLength="37.700" lengthAdjust="spacingAndGlyphs">Отмена</text>
<rect x="1019.500" y="413.500" width="72" height="20" fill="#e1e1e1" stroke="#adadad"/><text x="1039.300" y="428" style="fill:#111" textLength="30.300" lengthAdjust="spacingAndGlyphs">Сброс</text>
<path d="M1100 435h2v2h-2zM1097 438h2v2h-2zM1100 438h2v2h-2zM1094 441h2v-1h-2zM1097 441h2v-1h-2zM1100 441h2v-1h-2z" fill="#bbb"/>
<!-- arrow -->
<path d="M755.500 515.500 870 432" stroke="#f00" stroke-width="3" stroke-linecap="round" fill="none"/>
<path d="M879.500 426 865 431.500 873.500 437.500Z" fill="#f00"/>
</svg>
</body></html>
